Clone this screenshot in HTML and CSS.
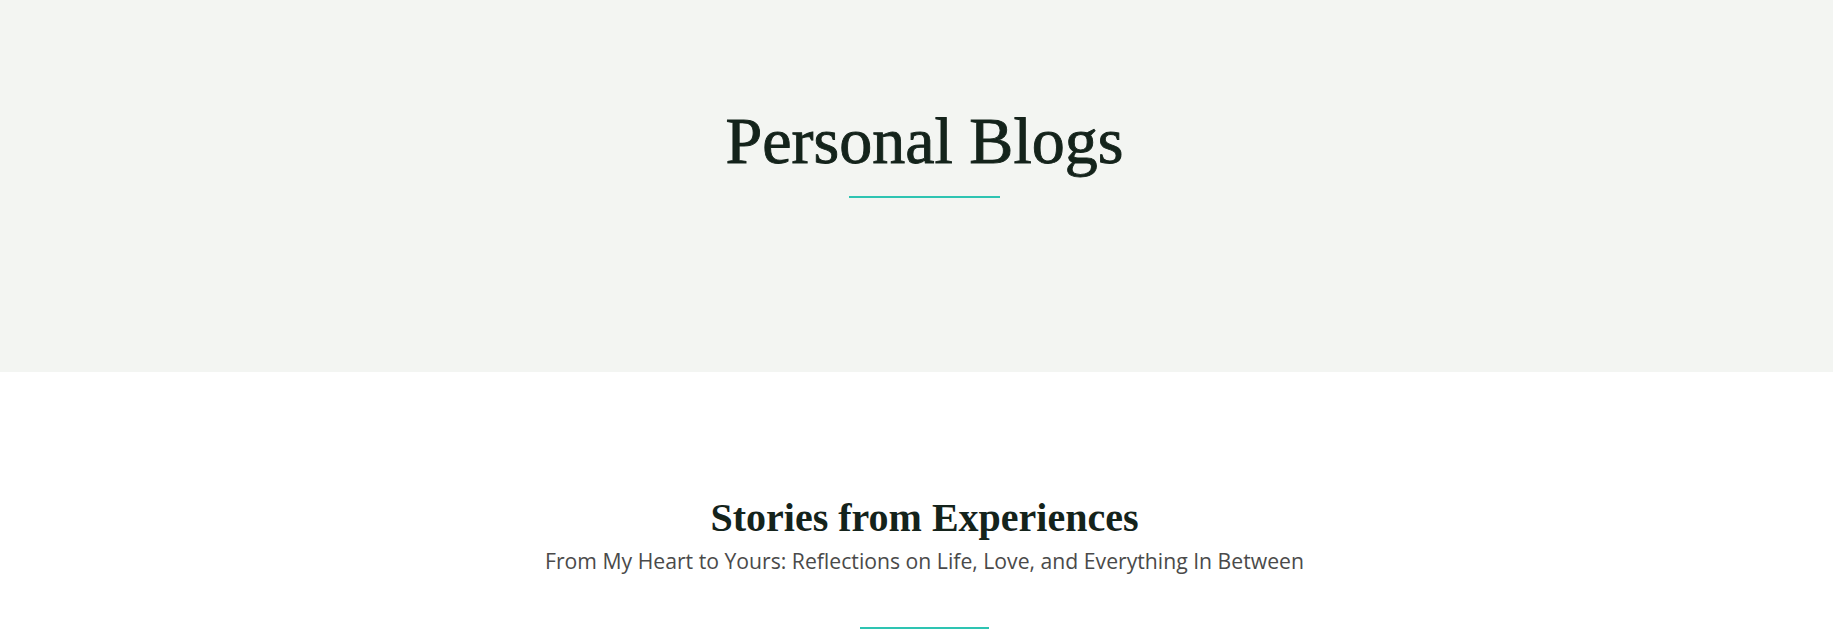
FILE: index.html
```html
<!DOCTYPE html>
<html lang="en">
<head>
<meta charset="utf-8">
<title>Personal Blogs</title>
<link rel="stylesheet" href="styles.css">
</head>
<body>
<header class="hero">
  <h1 class="hero-title">Personal Blogs</h1>
  <span class="hero-rule"></span>
</header>
<section class="stories">
  <h2 class="stories-title">Stories from Experiences</h2>
  <p class="stories-sub">From My Heart to Yours: Reflections on Life, Love, and Everything In Between</p>
  <span class="stories-rule"></span>
</section>
</body>
</html>
```
FILE: styles.css
```css
* { box-sizing: border-box; }
html, body { margin: 0; padding: 0; }
body {
  background: #ffffff;
  font-family: "Open Sans", "Liberation Sans", sans-serif;
  overflow: hidden;
}
.hero {
  height: 372px;
  background: #f3f5f2;
  display: flex;
  flex-direction: column;
  align-items: center;
  padding: 101px 0 0 16px;
}
.hero-title {
  margin: 0;
  font-family: "Liberation Serif", serif;
  font-weight: 400;
  font-size: 66px;
  line-height: 79px;
  color: #14231b;
  -webkit-text-stroke: 0.9px #14231b;
}
.hero-rule {
  display: block;
  width: 151px;
  height: 2px;
  margin-top: 16px;
  background: #2ec4b2;
}
.stories {
  display: flex;
  flex-direction: column;
  align-items: center;
  padding: 122px 0 0 16px;
}
.stories-title {
  margin: 0;
  font-family: "Liberation Serif", serif;
  font-weight: 700;
  font-size: 40px;
  line-height: 48px;
  color: #14231b;
}
.stories-sub {
  margin: 4px 0 0;
  font-family: "Open Sans", sans-serif;
  font-size: 21.2px;
  line-height: 30px;
  color: #4a4a4a;
}
.stories-rule {
  display: block;
  width: 129px;
  height: 2px;
  margin-top: 51px;
  background: #2ec4b2;
}
```
